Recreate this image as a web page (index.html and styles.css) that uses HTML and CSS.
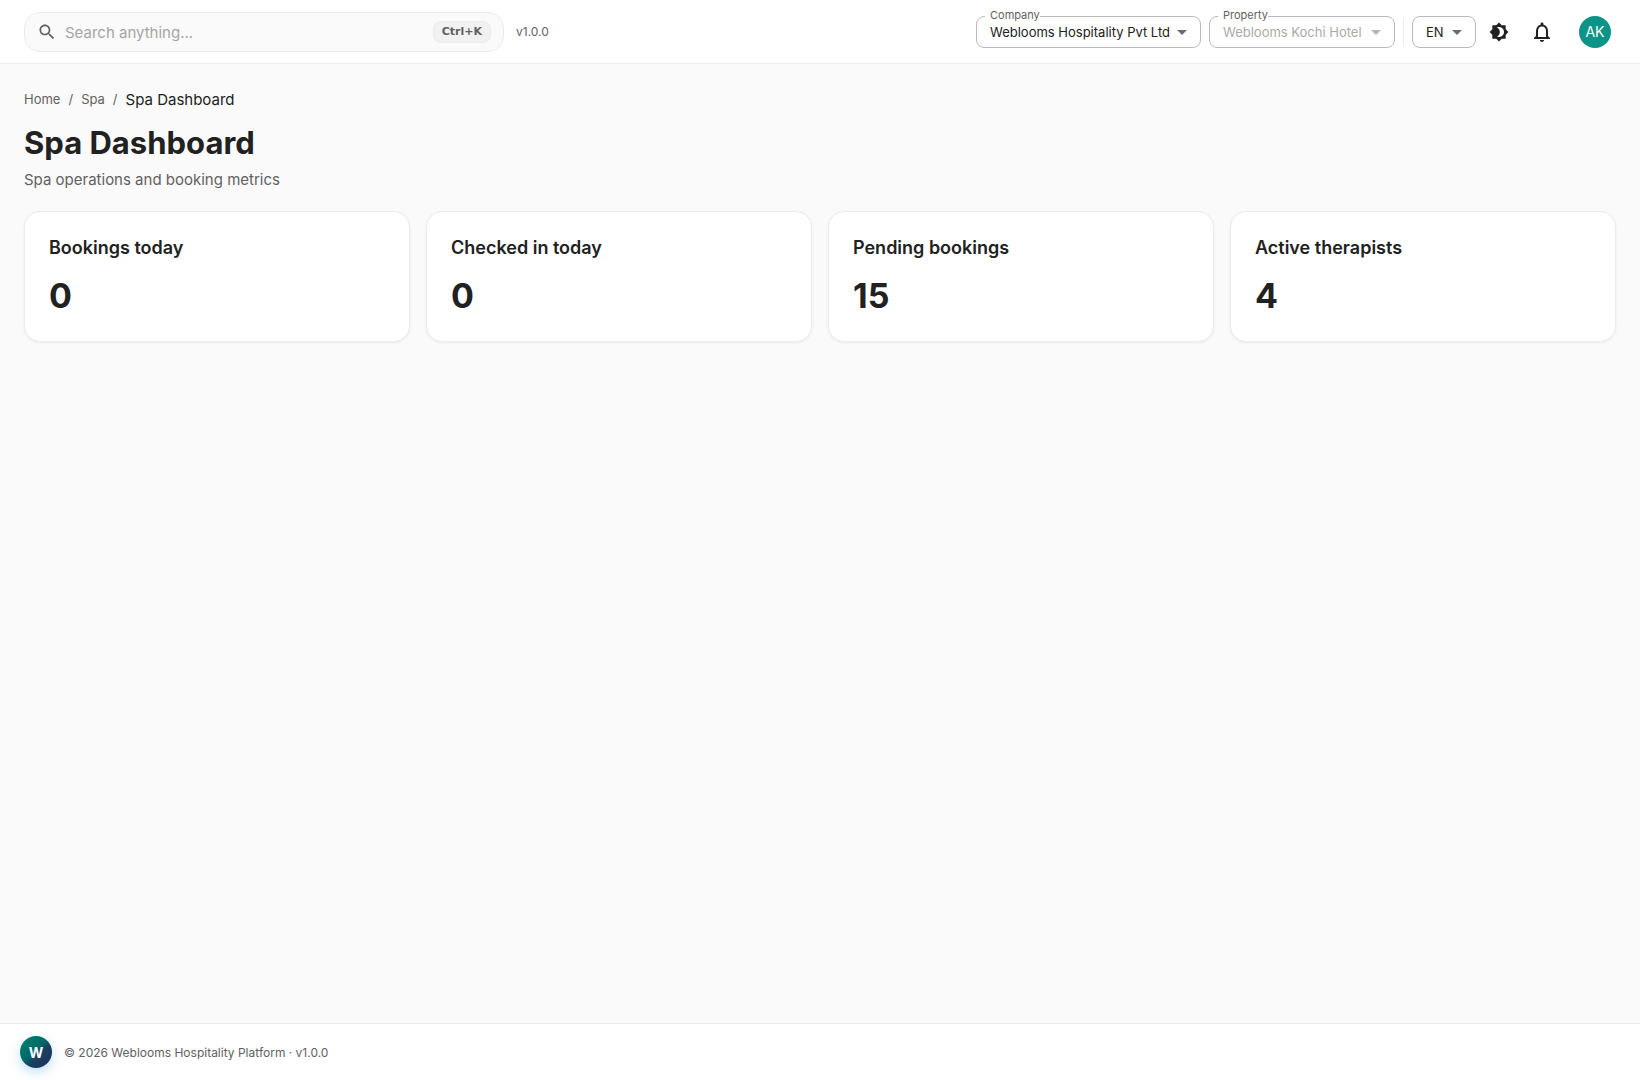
FILE: index.html
```html
<!DOCTYPE html>
<html lang="en">
<head>
<meta charset="utf-8">
<title>Spa Dashboard</title>
<link rel="stylesheet" href="styles.css">
</head>
<body>
<header class="topbar">
  <div class="search">
    <svg class="search-icon" viewBox="0 0 24 24" aria-hidden="true"><path d="M15.5 14h-.79l-.28-.27C15.41 12.59 16 11.11 16 9.5 16 5.91 13.09 3 9.5 3S3 5.91 3 9.5 5.91 16 9.5 16c1.61 0 3.09-.59 4.23-1.57l.27.28v.79l5 4.99L20.49 19l-4.99-5zm-6 0C7.01 14 5 11.99 5 9.5S7.01 5 9.5 5 14 7.01 14 9.5 11.99 14 9.5 14z"/></svg>
    <input class="search-input" type="text" placeholder="Search anything..." aria-label="Search anything">
    <kbd class="shortcut">Ctrl+K</kbd>
  </div>
  <span class="version">v1.0.0</span>
  <div class="tools">
    <div class="field">
      <label class="field-label" for="company">Company</label>
      <select class="select company" id="company"><option>Weblooms Hospitality Pvt Ltd</option></select>
      <svg class="arrow" viewBox="0 0 24 24" aria-hidden="true"><path d="M7 10l5 5 5-5z"/></svg>
    </div>
    <div class="field">
      <label class="field-label" for="property">Property</label>
      <select class="select property" id="property" disabled><option>Weblooms Kochi Hotel</option></select>
      <svg class="arrow arrow-disabled" viewBox="0 0 24 24" aria-hidden="true"><path d="M7 10l5 5 5-5z"/></svg>
    </div>
    <div class="divider"></div>
    <div class="field">
      <select class="select language" aria-label="Language"><option>EN</option></select>
      <svg class="arrow" viewBox="0 0 24 24" aria-hidden="true"><path d="M7 10l5 5 5-5z"/></svg>
    </div>
    <div class="actions">
      <button class="icon-button" type="button" aria-label="Toggle theme"><svg class="icon" viewBox="0 0 24 24"><path d="M20 8.69V4h-4.69L12 .69 8.69 4H4v4.69L.69 12 4 15.31V20h4.69L12 23.31 15.31 20H20v-4.69L23.31 12 20 8.69zM12 18c-.89 0-1.74-.2-2.5-.55C11.56 16.5 13 14.42 13 12s-1.44-4.5-3.5-5.45C10.26 6.2 11.11 6 12 6c3.31 0 6 2.69 6 6s-2.69 6-6 6z"/></svg></button>
      <button class="icon-button" type="button" aria-label="Notifications"><svg class="icon icon-large" viewBox="0 0 24 24"><path d="M12 22c1.1 0 2-.9 2-2h-4c0 1.100.89 2 2 2zm6-6v-5c0-3.070-1.640-5.640-4.500-6.320V4c0-.83-.67-1.500-1.500-1.500s-1.500.67-1.500 1.500v.68C7.630 5.360 6 7.920 6 11v5l-2 2v1h16v-1l-2-2zm-2 1H8v-6c0-2.480 1.510-4.500 4-4.500s4 2.020 4 4.500v6z"/></svg></button>
    </div>
    <button class="avatar" type="button" aria-label="Account">AK</button>
  </div>
</header>
<main class="content">
  <nav class="crumbs" aria-label="Breadcrumb">
    <a href="#">Home</a><span>/</span><a href="#">Spa</a><span>/</span><span class="current" aria-current="page">Spa Dashboard</span>
  </nav>
  <h1 class="title">Spa Dashboard</h1>
  <p class="subtitle">Spa operations and booking metrics</p>
  <section class="cards">
    <article class="card"><h2 class="card-title">Bookings today</h2><p class="value">0</p></article>
    <article class="card"><h2 class="card-title">Checked in today</h2><p class="value">0</p></article>
    <article class="card"><h2 class="card-title">Pending bookings</h2><p class="value">15</p></article>
    <article class="card"><h2 class="card-title">Active therapists</h2><p class="value">4</p></article>
  </section>
</main>
<footer class="footer">
  <button class="brand" type="button" aria-label="Weblooms">W</button>
  <span>© 2026 Weblooms Hospitality Platform · v1.0.0</span>
</footer>
</body>
</html>
```

FILE: styles.css
```css
* { box-sizing: border-box; }

body {
  margin: 0;
  min-height: 100vh;
  display: flex;
  flex-direction: column;
  background: #fafafa;
  color: #212121;
  font-family: Inter, sans-serif;
  font-size: 15px;
}

h1, h2, p { margin: 0; }
button, input, select { font-family: inherit; }

.topbar {
  display: flex;
  align-items: center;
  height: 64px;
  padding: 0 24px;
  background: #fff;
  border-bottom: 1px solid #ececec;
}

.search {
  display: flex;
  align-items: center;
  gap: 8px;
  width: 480px;
  height: 40px;
  padding: 0 12px;
  background: #fafafa;
  border: 1px solid #ececec;
  border-radius: 16px;
}
.search-icon { width: 20px; height: 20px; fill: #616161; }
.search-input {
  flex: 1;
  min-width: 0;
  padding: 2px 0 0;
  border: 0;
  outline: 0;
  background: none;
  font-size: 15px;
  color: #212121;
}
.search-input::placeholder { color: #a3a6a3; opacity: 1; }
.shortcut {
  padding: 0 8px;
  border: 1px solid #ececec;
  border-radius: 8px;
  background: #f0f1f0;
  color: #616161;
  font: 700 11px/20px "DejaVu Sans", sans-serif;
}
.version { margin-left: 12px; font-size: 12px; color: #616161; }

.tools {
  display: flex;
  align-items: center;
  gap: 8px;
  margin-left: auto;
  padding-right: 5px;
}
.field { position: relative; }
.field-label {
  position: absolute;
  top: -8px;
  left: 9px;
  padding-left: 5px;
  background: #fff;
  font-size: 11px;
  line-height: 14px;
  color: #616161;
}
.select {
  display: block;
  height: 32px;
  padding: 1px 13px 0;
  appearance: none;
  border: 1px solid #b9bcbf;
  border-radius: 8px;
  background: #fff;
  color: #212121;
  font-size: 13px;
}
.select:disabled { color: #a8aba8; opacity: 1; }
.company { width: 225px; }
.property { width: 186px; }
.language { width: 64px; }
.arrow {
  position: absolute;
  top: 4px;
  right: 7px;
  width: 24px;
  height: 24px;
  fill: #6b6b76;
  pointer-events: none;
}
.arrow-disabled { fill: #b3b6ba; }
.divider { width: 1px; height: 28px; background: #ececec; }

.actions { display: flex; gap: 5px; margin-left: -4px; }
.icon-button {
  display: flex;
  align-items: center;
  justify-content: center;
  width: 38px;
  height: 40px;
  padding: 0;
  border: 0;
  background: none;
  color: #212121;
}
.icon { width: 20px; height: 20px; fill: currentColor; }
.icon-large { width: 24px; height: 24px; }
.avatar {
  width: 32px;
  height: 32px;
  margin-left: 10px;
  padding: 0;
  border: 0;
  border-radius: 50%;
  background: #0d9488;
  color: #fff;
  font-size: 14px;
}

.content { flex: 1; padding: 24px; }
.crumbs {
  display: flex;
  align-items: center;
  gap: 8px;
  height: 22px;
  font-size: 13px;
  color: #616161;
}
.crumbs a { color: inherit; text-decoration: none; }
.crumbs .current { font-size: 15px; color: #212121; }
.title { margin-top: 12px; font-size: 31px; line-height: 42px; font-weight: 700; }
.subtitle { margin-top: 4px; line-height: 23px; color: #616161; }

.cards {
  display: grid;
  grid-template-columns: repeat(4, 1fr);
  gap: 16px;
  margin-top: 20px;
}
.card {
  padding: 24px;
  background: #fff;
  border: 1px solid #ececec;
  border-radius: 16px;
  box-shadow: 0 1px 3px rgba(0, 0, 0, .06);
}
.card-title { font-size: 18px; line-height: 24px; font-weight: 600; }
.value { margin-top: 14px; font-size: 34px; line-height: 43px; font-weight: 700; }

.footer {
  display: flex;
  align-items: center;
  gap: 12px;
  padding: 12px 20px;
  background: #fff;
  border-top: 1px solid #ececec;
  color: #616161;
  font-size: 12px;
}
.brand {
  width: 32px;
  height: 32px;
  padding: 0;
  border: 0;
  border-radius: 50%;
  background: linear-gradient(135deg, #00796b 20%, #00696b 45%, #1a4060 60%, #1e2f5c);
  box-shadow: 0 4px 12px rgba(2, 132, 199, .25);
  color: #fff;
  font-size: 14px;
  font-weight: 700;
}
```
